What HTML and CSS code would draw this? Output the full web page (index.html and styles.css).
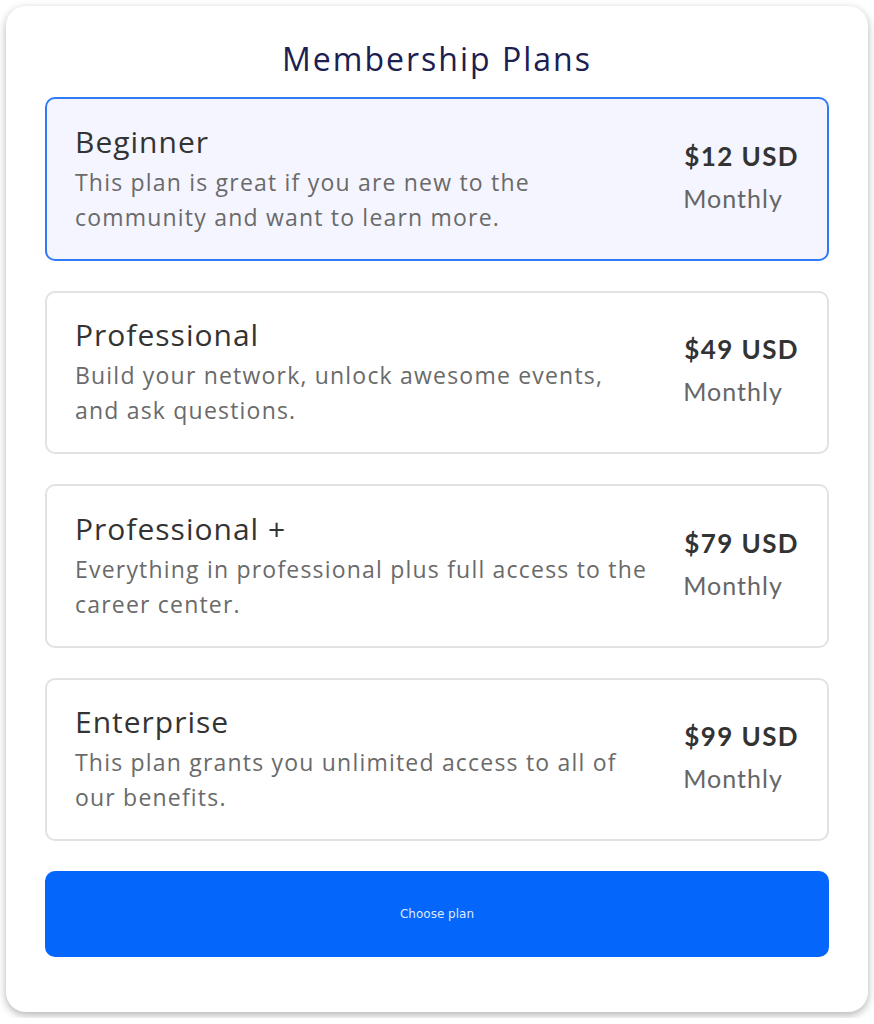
FILE: index.html
```html
<!DOCTYPE html>
<html lang="en">
<head>
    <meta charset="UTF-8">
    <meta name="viewport" content="width=device-width, initial-scale=1.0">
    <title>Membership Plans</title>
    <link rel="stylesheet" href="styles.css">
</head>
<body>
    <div class="plans-container">
        <h2>Membership Plans</h2>
        <div class="plan-list">
            <div class="plan selected">
                <div class="plan-info">
                    <h3>Beginner</h3>
                    <p>This plan is great if you are new to the<br>community and want to learn more.</p>
                </div>
                <div class="plan-price">
                    <span class="amount">$12 USD</span>
                    <span class="period">Monthly</span>
                </div>
            </div>
            <div class="plan">
                <div class="plan-info">
                    <h3>Professional</h3>
                    <p>Build your network, unlock awesome events,<br>and ask questions.</p>
                </div>
                <div class="plan-price">
                    <span class="amount">$49 USD</span>
                    <span class="period">Monthly</span>
                </div>
            </div>
            <div class="plan">
                <div class="plan-info">
                    <h3>Professional +</h3>
                    <p>Everything in professional plus full access to the<br>career center.</p>
                </div>
                <div class="plan-price">
                    <span class="amount">$79 USD</span>
                    <span class="period">Monthly</span>
                </div>
            </div>
            <div class="plan">
                <div class="plan-info">
                    <h3>Enterprise</h3>
                    <p>This plan grants you unlimited access to all of<br>our benefits.</p>
                </div>
                <div class="plan-price">
                    <span class="amount">$99 USD</span>
                    <span class="period">Monthly</span>
                </div>
            </div>
        </div>
        <button type="button" class="choose-btn">Choose plan</button>
    </div>
</body>
</html>
```

FILE: styles.css
```css
body {
    margin: 0;
    padding: 6px 6px;
    background-color: #fff;
    font-family: "Open Sans", sans-serif;
}

.plans-container {
    box-sizing: border-box;
    width: 862px;
    height: 1006px;
    padding: 33px 39px 0;
    background: #fff;
    border-radius: 20px;
    box-shadow: 0 3px 8px rgba(0, 0, 0, 0.3);
}

.plans-container h2 {
    margin: 0 0 18px;
    text-align: center;
    font-size: 32px;
    font-weight: 500;
    line-height: 40px;
    letter-spacing: 2px;
    color: #1b2050;
}

.plan-list {
    display: flex;
    flex-direction: column;
    gap: 30px;
}

.plan {
    box-sizing: border-box;
    height: 163.5px;
    display: flex;
    align-items: center;
    justify-content: space-between;
    padding: 0 28px;
    border: 2px solid #e2e2e2;
    border-radius: 10px;
    background: #fff;
}

.plan.selected {
    border-color: #2f7bf5;
    background: #f4f5fe;
}

.plan-info h3 {
    margin: 0 0 4px;
    font-size: 30px;
    font-weight: 500;
    line-height: 38px;
    letter-spacing: 1px;
    color: #333;
}

.plan-info p {
    margin: 0;
    font-size: 23px;
    line-height: 35px;
    letter-spacing: 1.2px;
    color: #6a6a6a;
}

.plan-price {
    display: flex;
    flex-direction: column;
    gap: 11px;
    padding-bottom: 5px;
    font-family: "Lato", sans-serif;
}

.plan-price .amount {
    font-size: 26px;
    font-weight: bold;
    letter-spacing: 1.4px;
    color: #333;
}

.plan-price .period {
    margin-left: -1px;
    font-size: 25px;
    letter-spacing: 1px;
    color: #666;
}

.choose-btn {
    display: block;
    width: 100%;
    height: 86px;
    margin-top: 30px;
    border: none;
    border-radius: 10px;
    background-color: #0466fb;
    color: #dfe9ff;
    font-family: "DejaVu Sans", sans-serif;
    font-size: 12px;
    cursor: pointer;
}
```
